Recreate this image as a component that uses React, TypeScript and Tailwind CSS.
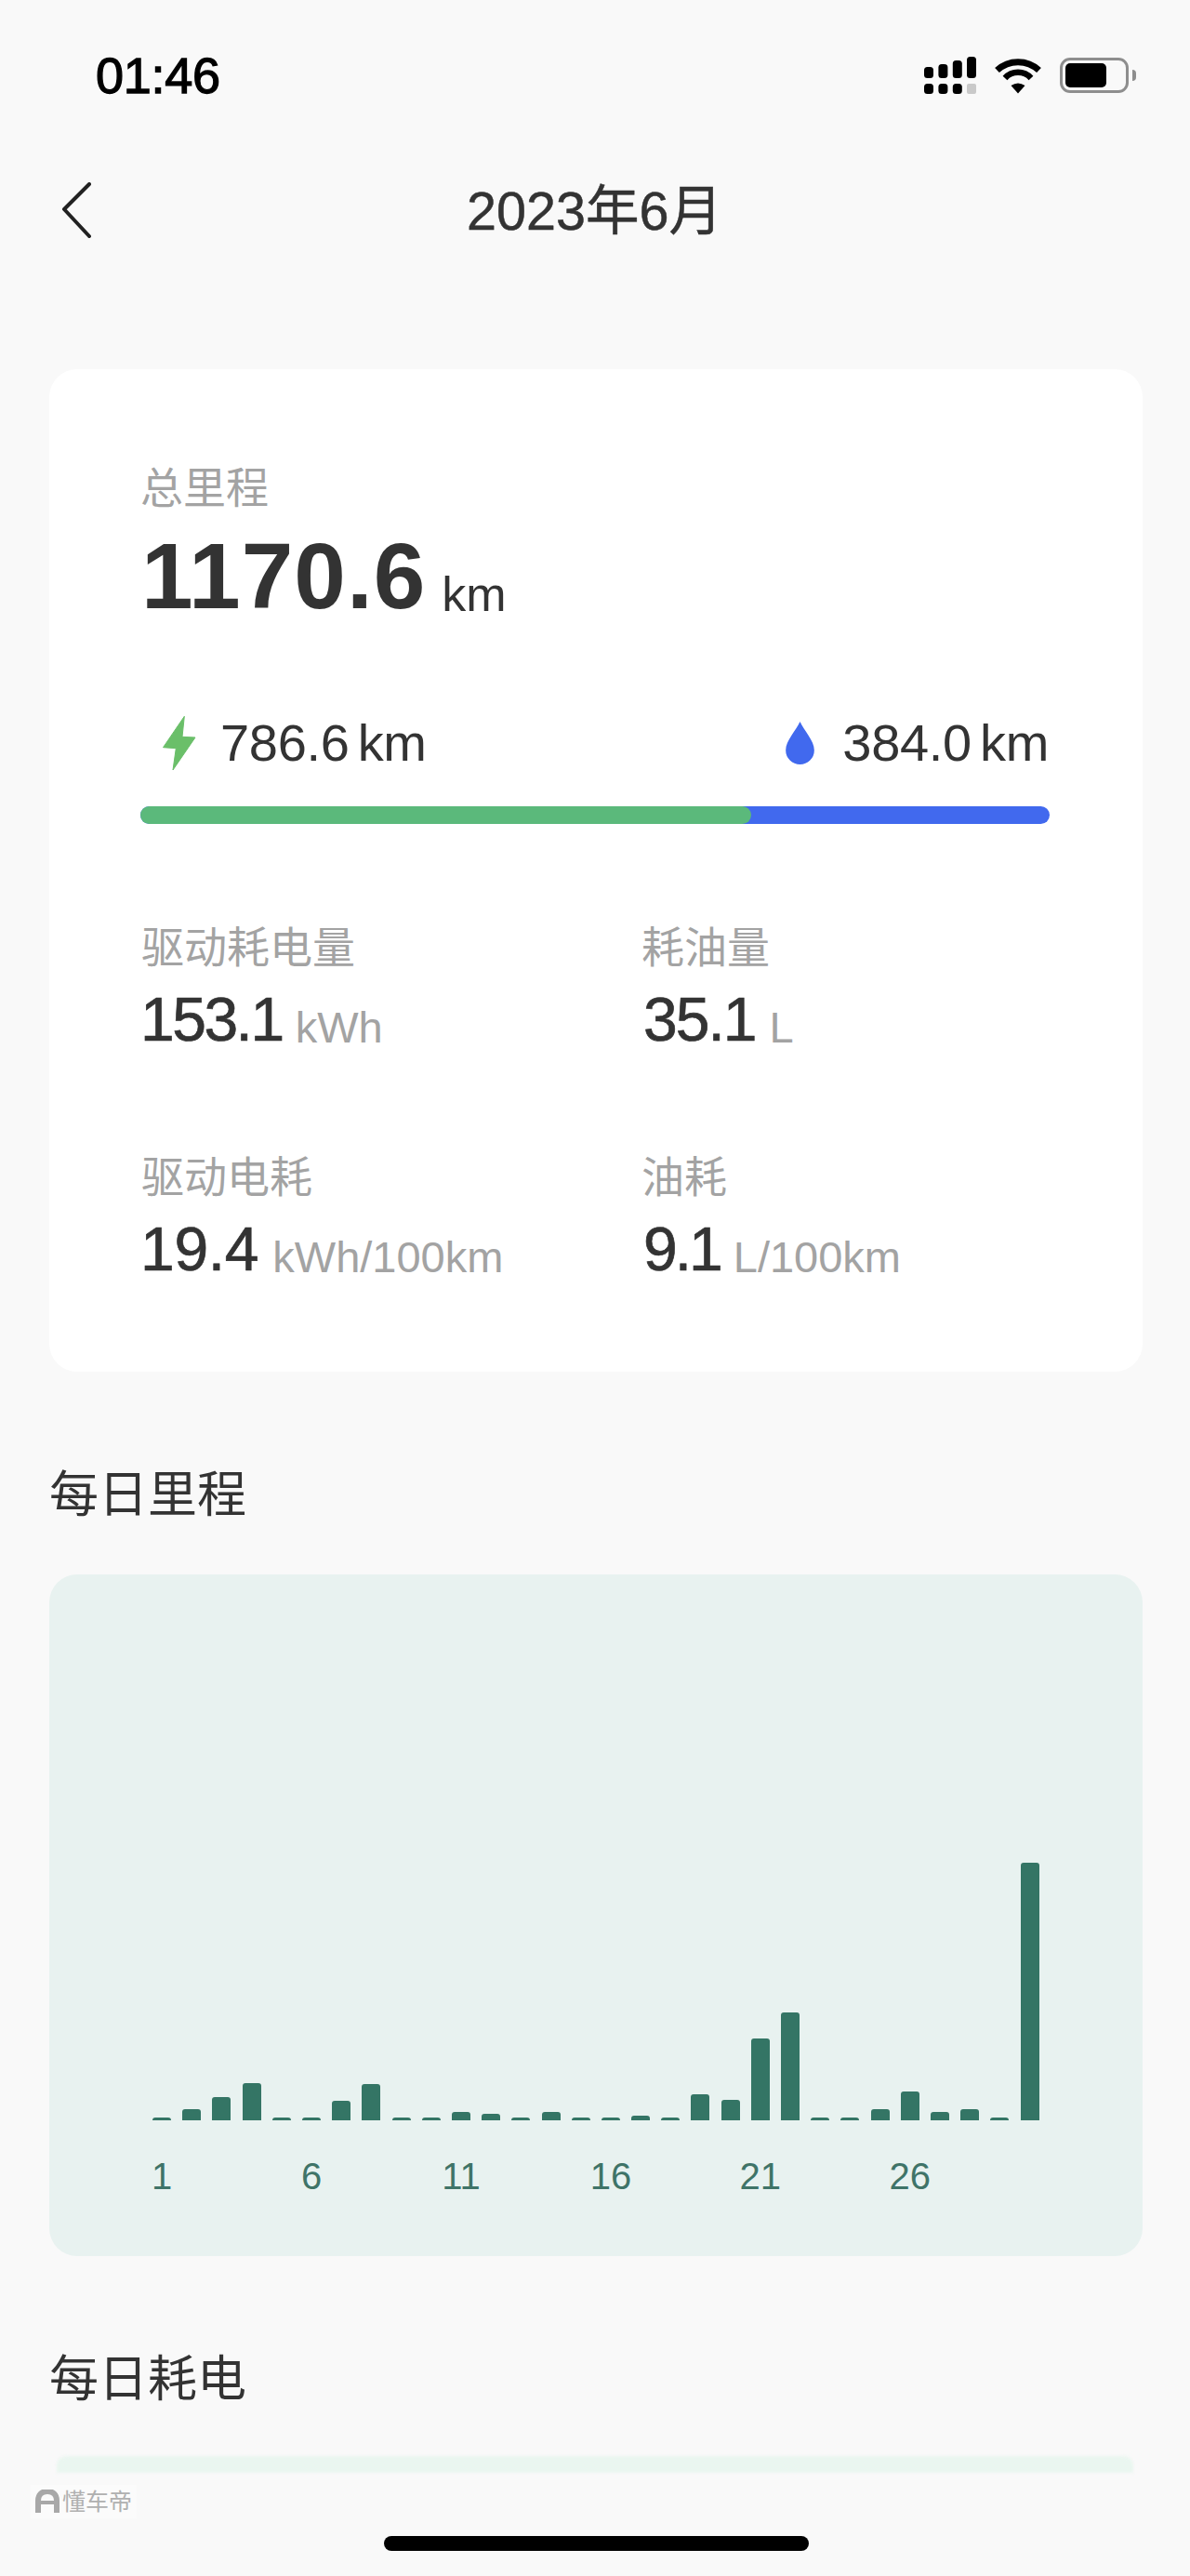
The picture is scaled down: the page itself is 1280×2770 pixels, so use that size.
import React from "react";

const bars = [3.5, 12, 25, 40, 3.5, 3.5, 21, 39, 3.5, 3.5, 9.5, 7.5, 3.5, 9.5, 3.5, 3.5, 5, 3.5, 28, 22, 88, 116, 3.5, 3.5, 12, 31, 9, 12, 3.5, 277];

function Stat({ label, value, unit, gap, shift, track }: { label: string; value: string; unit: string; gap: string; shift: string; track: string }) {
  return (
    <div>
      <div className="-ml-[1px] h-[56px] translate-y-[1px] text-[46px] leading-[56px] text-[#a3a3a3]">{label}</div>
      <div className={`${shift} mt-[14px] flex h-[70px] items-baseline`}>
        <span className={`${track} translate-y-[1px] text-[66px] leading-[70px] text-[#333333] [-webkit-text-stroke:0.7px_#333333]`}>{value}</span>
        <span className={`${gap} translate-y-[3px] text-[47px] leading-[70px] text-[#a3a3a3]`}>{unit}</span>
      </div>
    </div>
  );
}

function StatusIcons() {
  return (
    <div className="flex items-center">
      <svg width="56" height="40" viewBox="0 0 56 40" className="mr-[19px]">
        <rect x="0" y="11" width="10" height="12" rx="3.5" fill="#000" />
        <rect x="15.4" y="8" width="10" height="15" rx="3.5" fill="#000" />
        <rect x="30.8" y="4" width="10" height="19" rx="3.5" fill="#000" />
        <rect x="46" y="0" width="10" height="23" rx="3.5" fill="#000" />
        <rect x="0" y="29" width="10" height="11" rx="3.5" fill="#000" />
        <rect x="15.4" y="29" width="10" height="11" rx="3.5" fill="#000" />
        <rect x="30.8" y="29" width="10" height="11" rx="3.5" fill="#000" />
        <rect x="46" y="29" width="10" height="11" rx="2" fill="#c9c9c9" />
      </svg>
      <svg width="52" height="39" viewBox="0 0 52 39" className="mr-[19px]">
        <path d="M3.5 13.5A33 33 0 0 1 48.5 13.5" fill="none" stroke="#000" strokeWidth="7" />
        <path d="M12 22A19 19 0 0 1 40 22" fill="none" stroke="#000" strokeWidth="6.5" />
        <path d="M18.5 30Q26 25 33.5 30L26 38.5Z" fill="#000" />
      </svg>
      <div className="flex h-[38px] w-[74px] items-center rounded-[11px] border-[3px] border-[#8e8e8e] pl-[3px]">
        <div className="h-[26px] w-[44px] rounded-[5px] bg-black" />
      </div>
      <div className="ml-[4px] h-[12px] w-[4px] rounded-r-[4px] bg-[#8e8e8e]" />
    </div>
  );
}

export default function App() {
  return (
    <div className="relative h-[2770px] w-[1280px] overflow-hidden bg-[#f9f9f9] font-['Liberation_Sans','Noto_Sans_CJK_SC',sans-serif]">
      <div className="mt-[56px] flex h-[50px] items-center justify-between pl-[103px] pr-[58px]">
        <span className="text-[54px] leading-[50px] tracking-[-0.3px] text-black [-webkit-text-stroke:1.3px_#000000]">01:46</span>
        <StatusIcons />
      </div>

      <div className="mt-[90px] grid h-[60px] grid-cols-[1fr_auto_1fr] items-center pr-[1px]">
        <svg width="34" height="60" viewBox="0 0 34 60" className="ml-[65px]">
          <path d="M31 2L4 29L31 58" fill="none" stroke="#222222" strokeWidth="4" strokeLinecap="round" strokeLinejoin="round" />
        </svg>
        <span className="translate-y-[1px] text-[57.5px] leading-[60px] text-[#333333] [-webkit-text-stroke:0.5px_#333333]">2023年6月</span>
        <span />
      </div>

      <section className="mx-[53px] mt-[141px] w-[1176px] rounded-[30px] bg-white px-[100px] pb-[98px] pt-[97px]">
        <div className="-ml-[2px] h-[56px] translate-y-[3px] text-[46px] leading-[56px] text-[#a3a3a3]">总里程</div>
        <div className="mt-[20px] -ml-[1px] flex h-[98px] items-baseline">
          <span className="text-[100px] font-bold leading-[98px] tracking-[1px] text-[#333333]">1170.6</span>
          <span className="ml-[17px] translate-y-[3px] text-[52px] leading-[98px] text-[#333333]">km</span>
        </div>

        <div className="mt-[101px] flex h-[60px] items-center justify-between pl-[22px] pr-[1px]">
          <div className="flex items-center">
            <svg width="36" height="60" viewBox="0 0 36 60" className="mr-[26px]">
              <path d="M23.3 1.3L0.5 34.7L14.3 35.7L11 59L35 24L21 23.3Z" fill="#6abf69" stroke="#6abf69" strokeWidth="1" strokeLinejoin="round" />
            </svg>
            <span className="text-[56px] leading-[60px] tracking-[-0.3px] text-[#333333]">786.6<span className="ml-[9px]">km</span></span>
          </div>
          <div className="flex items-center">
            <svg width="31" height="46" viewBox="0 0 30 45" className="mr-[30px]">
              <path d="M15 0C11 9 0 20 0 30A15 15 0 0 0 30 30C30 20 19 9 15 0Z" fill="#4169ee" />
            </svg>
            <span className="text-[56px] leading-[60px] tracking-[-0.3px] text-[#333333]">384.0<span className="ml-[9px]">km</span></span>
          </div>
        </div>

        <div className="mt-[38px] flex h-[19px] w-[978px] -translate-x-[2px] overflow-hidden rounded-full bg-[#4169ee]">
          <div className="h-full w-[657px] rounded-r-full bg-[#5bb97b]" />
        </div>

        <div className="mt-[104px] grid grid-cols-[538px_1fr] gap-y-[107px]">
          <Stat label="驱动耗电量" value="153.1" unit="kWh" gap="ml-[14px]" shift="-ml-[2px]" track="tracking-[-2.5px]" />
          <Stat label="耗油量" value="35.1" unit="L" gap="ml-[15px]" shift="ml-[1px]" track="tracking-[-2px]" />
          <Stat label="驱动电耗" value="19.4" unit="kWh/100km" gap="ml-[15px]" shift="-ml-[2px]" track="tracking-[-0.3px]" />
          <Stat label="油耗" value="9.1" unit="L/100km" gap="ml-[14px]" shift="ml-[1px]" track="tracking-[-3px]" />
        </div>
      </section>

      <h2 className="ml-[53px] mt-[101px] h-[64px] text-[53px] font-normal leading-[64px] text-[#333333]">每日里程</h2>

      <section className="mx-[53px] mt-[53px] h-[733px] w-[1176px] rounded-[30px] bg-[#e8f2f0] pl-[105px] pt-[310px]">
        <div className="grid h-[277px] w-[966px] grid-cols-[repeat(30,32.2px)] items-end">
          {bars.map((h, i) => (
            <div key={i} className="mx-auto w-[20px] rounded-t-[3px] bg-[#347565]" style={{ height: h }} />
          ))}
        </div>
        <div className="mt-[38px] grid h-[44px] w-[966px] grid-cols-[repeat(30,32.2px)]">
          {bars.map((_, i) => (
            <div key={i} className="flex justify-center whitespace-nowrap text-[40px] leading-[44px] text-[#3f7468]">
              {i % 5 === 0 ? i + 1 : ""}
            </div>
          ))}
        </div>
      </section>

      <h2 className="ml-[53px] mt-[101px] h-[64px] text-[53px] font-normal leading-[64px] text-[#333333]">每日耗电</h2>

      <div className="ml-[61px] mt-[50px] h-[18px] w-[1158px] rounded-t-[10px] bg-[#eaf6f0] blur-[1.5px]" />

      <div className="absolute left-[33px] top-[2672px] flex h-[36px] w-[114px] items-center bg-[#fbfbfb] pl-[4px]">
        <svg width="28" height="26" viewBox="0 0 28 26" className="mr-[2px]">
          <path d="M4 25V12C4 5 8 2 14 2S24 5 24 12V25" fill="none" stroke="#a8a8a8" strokeWidth="6" />
          <path d="M3 14H25" stroke="#a8a8a8" strokeWidth="4" />
        </svg>
        <span className="text-[25px] leading-[30px] text-[#b0b0b0]">懂车帝</span>
      </div>

      <div className="absolute left-[413px] top-[2727px] h-[16px] w-[457px] rounded-full bg-black" />
    </div>
  );
}
